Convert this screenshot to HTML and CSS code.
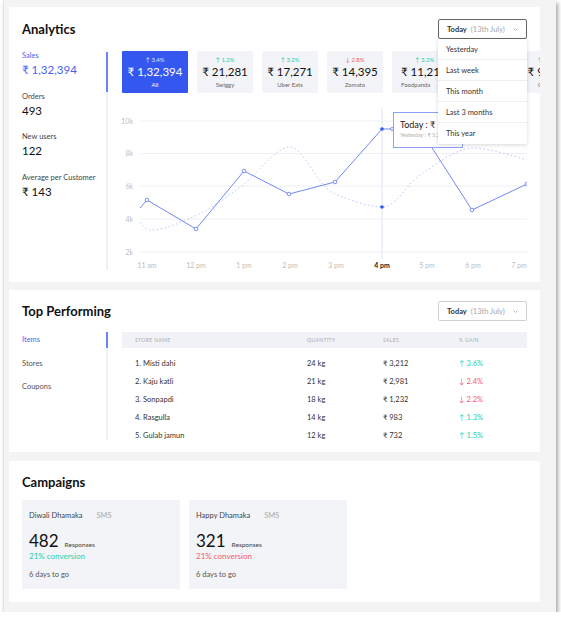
FILE: index.html
```html
<!DOCTYPE html>
<html>
<head>
<meta charset="utf-8">
<title>Dashboard</title>
<link rel="stylesheet" href="styles.css">
</head>
<body>
<div class="frame">
  <section class="card analytics">
    <header class="card-head">
      <h2>Analytics</h2>
      <div class="select open">
        <span class="sel-main">Today</span><span class="sel-sub">(13th July)</span>
        <svg class="caret" width="5" height="3" viewBox="0 0 5 3"><path d="M0.5 0.5 L2.5 2.5 L4.5 0.5" fill="none" stroke="#aaa" stroke-width="0.8"/></svg>
        <ul class="menu">
          <li>Yesterday</li>
          <li>Last week</li>
          <li>This month</li>
          <li>Last 3 months</li>
          <li>This year</li>
        </ul>
      </div>
    </header>
    <div class="an-body">
      <ul class="stats">
        <li class="active"><div class="s-label">Sales</div><div class="s-value">₹ 1,32,394</div></li>
        <li><div class="s-label">Orders</div><div class="s-value">493</div></li>
        <li><div class="s-label">New users</div><div class="s-value">122</div></li>
        <li><div class="s-label">Average per Customer</div><div class="s-value">₹ 143</div></li>
      </ul>
      <div class="an-main">
        <div class="chips">
          <div class="chip active"><div class="pct">↑ 3.4%</div><div class="val">₹ 1,32,394</div><div class="lbl">All</div></div>
          <div class="chip"><div class="pct up">↑ 1.2%</div><div class="val">₹ 21,281</div><div class="lbl">Swiggy</div></div>
          <div class="chip"><div class="pct up">↑ 3.2%</div><div class="val">₹ 17,271</div><div class="lbl">Uber Eats</div></div>
          <div class="chip"><div class="pct down">↓ 2.8%</div><div class="val">₹ 14,395</div><div class="lbl">Zomato</div></div>
          <div class="chip wide"><div class="pct up">↑ 3.2%</div><div class="val">₹ 11,212</div><div class="lbl">Foodpanda</div></div>
          <div class="chip"><div class="pct up">↑ 1.8%</div><div class="val">₹ 9,231</div><div class="lbl">Others</div></div>
        </div>
        <div class="chart">
          <svg width="419" height="177" viewBox="108 93 419 177">
            <g stroke="#eef0f3" stroke-width="1">
              <line x1="140" y1="121" x2="527" y2="121"/>
              <line x1="140" y1="153.5" x2="527" y2="153.5"/>
              <line x1="140" y1="186" x2="527" y2="186"/>
              <line x1="140" y1="219" x2="527" y2="219"/>
              <line x1="140" y1="252" x2="527" y2="252"/>
            </g>
            <line x1="382" y1="108" x2="382" y2="259" stroke="#dfe5fc" stroke-width="1"/>
            <g font-family="Lato, 'Noto Sans', sans-serif" font-size="7" fill="#bdbdbd" text-anchor="end">
              <text x="133" y="123.5">10k</text>
              <text x="133" y="156">8k</text>
              <text x="133" y="188.5">6k</text>
              <text x="133" y="221.5">4k</text>
              <text x="133" y="254.5">2k</text>
            </g>
            <g font-family="Lato, 'Noto Sans', sans-serif" font-size="7" fill="#bdbdbd" text-anchor="middle">
              <text x="147" y="267.5">11 am</text>
              <text x="196" y="267.5">12 pm</text>
              <text x="244" y="267.5">1 pm</text>
              <text x="290" y="267.5">2 pm</text>
              <text x="336" y="267.5">3 pm</text>
              <text x="382" y="267.5" fill="#222" font-weight="700">4 pm</text>
              <text x="427" y="267.5">5 pm</text>
              <text x="473" y="267.5">6 pm</text>
              <text x="519" y="267.5">7 pm</text>
            </g>
            <path d="M140 222 C143 226 146 230 151 230 C165 230 182 222 197 215 C214 207 228 196 243 185 C259 172 276 147 290 147 C303 147 318 186 333 193 C348 200 370 207 382 207 C396 207 407 184 420 175 C437 163 458 148 472 148 C490 148 512 156 527 160" fill="none" stroke="#b9c5fa" stroke-width="1" stroke-dasharray="1.5 2.5"/>
            <polyline points="140,208 147,200 196,229 244,171 289,194 335,182 382,129 392,129 427,140 472,210 527,184" fill="none" stroke="#7189f3" stroke-width="1"/>
            <g fill="#fff" stroke="#6d86f3" stroke-width="0.9">
              <circle cx="147" cy="200" r="1.8"/>
              <circle cx="196" cy="229" r="1.8"/>
              <circle cx="244" cy="171" r="1.8"/>
              <circle cx="289" cy="194" r="1.8"/>
              <circle cx="335" cy="182" r="1.8"/>
              <circle cx="392" cy="129" r="1.5"/>
              <circle cx="472" cy="210" r="1.8"/>
              <circle cx="527" cy="184" r="1.8"/>
            </g>
            <circle cx="382" cy="129" r="1.8" fill="#3457f0"/>
            <circle cx="382" cy="207" r="1.8" fill="#3457f0"/>
          </svg>
          <div class="tooltip">
            <div class="tt-main">Today : ₹ 1,32,394</div>
            <div class="tt-sub">Yesterday : ₹ 5,212</div>
          </div>
        </div>
      </div>
    </div>
  </section>

  <section class="card top">
    <header class="card-head">
      <h2>Top Performing</h2>
      <div class="select">
        <span class="sel-main">Today</span><span class="sel-sub">(13th July)</span>
        <svg class="caret" width="5" height="3" viewBox="0 0 5 3"><path d="M0.5 0.5 L2.5 2.5 L4.5 0.5" fill="none" stroke="#aaa" stroke-width="0.8"/></svg>
      </div>
    </header>
    <div class="tp-body">
      <ul class="nav">
        <li class="active">Items</li>
        <li>Stores</li>
        <li>Coupons</li>
      </ul>
      <div class="table">
        <div class="t-head"><span>Store name</span><span>Quantity</span><span>Sales</span><span>% Gain</span></div>
        <div class="t-row"><span>1. Misti dahi</span><span>24 kg</span><span>₹ 3,212</span><span class="up">↑ 3.6%</span></div>
        <div class="t-row"><span>2. Kaju katli</span><span>21 kg</span><span>₹ 2,981</span><span class="down">↓ 2.4%</span></div>
        <div class="t-row"><span>3. Sonpapdi</span><span>18 kg</span><span>₹ 1,232</span><span class="down">↓ 2.2%</span></div>
        <div class="t-row"><span>4. Rasgulla</span><span>14 kg</span><span>₹ 983</span><span class="up">↑ 1.3%</span></div>
        <div class="t-row"><span>5. Gulab jamun</span><span>12 kg</span><span>₹ 732</span><span class="up">↑ 1.5%</span></div>
      </div>
    </div>
  </section>

  <section class="card campaigns">
    <h2>Campaigns</h2>
    <div class="camps">
      <div class="camp">
        <div class="camp-head"><span>Diwali Dhamaka</span><span class="tag">SMS</span></div>
        <div class="camp-num"><span class="big">482</span><span class="resp">Responses</span></div>
        <div class="conv up">21% conversion</div>
        <div class="days">6 days to go</div>
      </div>
      <div class="camp">
        <div class="camp-head"><span>Happy Dhamaka</span><span class="tag">SMS</span></div>
        <div class="camp-num"><span class="big">321</span><span class="resp">Responses</span></div>
        <div class="conv down">21% conversion</div>
        <div class="days">6 days to go</div>
      </div>
    </div>
  </section>
</div>
</body>
</html>
```

FILE: styles.css
```css
* { box-sizing: border-box; margin: 0; padding: 0; }
body { background: #fff; font-family: Lato, "Noto Sans", sans-serif; color: #222; }

.frame {
  margin-left: 3px;
  width: 553px;
  height: 612px;
  background: #f4f4f4;
  border-left: 1px solid #e4e4e4;
  box-shadow: 2px 3px 4px rgba(0,0,0,0.35);
  padding: 7px 16px 0 5px;
  display: flex;
  flex-direction: column;
  gap: 8px;
}

.card { background: #fff; padding: 12px 13px; position: relative; overflow: hidden; }
.analytics { height: 275px; }
.top { height: 162px; padding-top: 11px; }
.campaigns { height: 141px; margin-top: 1px; }

.card-head { display: flex; justify-content: space-between; align-items: center; height: 20px; }
h2 { font-size: 13px; font-weight: 700; color: #111; line-height: 18px; }

.select {
  width: 89px; height: 20px;
  border: 1px solid #cfcfcf; border-radius: 2px;
  display: flex; align-items: center;
  padding: 0 8px;
  font-size: 7.5px;
  position: relative;
  background: #fff;
  white-space: nowrap;
}
.select.open { border-color: #666; }
.sel-main { font-weight: 700; color: #333; }
.sel-sub { color: #a6a6a6; margin-left: 4px; }
.caret { margin-left: auto; }

.menu {
  position: absolute; top: 100%; left: -1px; width: 89px;
  margin-top: 1px;
  background: #fff; list-style: none;
  box-shadow: 0 1px 4px rgba(0,0,0,0.16);
  z-index: 10;
}
.menu li { height: 21px; line-height: 21px; padding-left: 8px; font-size: 7.5px; color: #333; border-bottom: 1px solid #eee; }
.menu li:last-child { border-bottom: none; }

.an-body { display: flex; margin-top: 12px; height: 219px; }
.stats { width: 86px; flex: none; border-right: 2px solid #eef0f3; list-style: none; }
.stats li { position: relative; height: 40.5px; }
.stats li.active::after { content: ""; position: absolute; right: -2px; top: 1px; height: 40px; width: 2px; background: #6b84f3; }
.s-label { font-size: 7.5px; line-height: 10px; color: #444; }
.s-value { font-size: 11.5px; line-height: 17px; color: #111; white-space: nowrap; }
.stats li.active .s-label, .stats li.active .s-value { color: #4864f0; }

.an-main { flex: 1; min-width: 0; padding-left: 14px; }
.chips { display: flex; gap: 9px; height: 42px; }
.chip {
  flex: none; width: 56px; background: #f3f4f8; border-radius: 1px;
  display: flex; flex-direction: column; align-items: center; justify-content: center;
  white-space: nowrap;
}
.chip.wide { width: 118px; align-items: flex-start; padding-left: 9px; }
.chip.wide .pct { padding-left: 14px; }
.chip .pct { font-size: 6px; line-height: 9px; }
.chip .val { font-size: 11.5px; line-height: 16px; color: #111; }
.chip .lbl { font-size: 6px; line-height: 9px; color: #666; }
.chip.active { background: #3457f0; width: 66px; }
.chip.active .val, .chip.active .lbl { color: #fff; }
.chip.active .pct { color: #dfe5ff; }

.up { color: #22d1ad; }
.down { color: #f45a6d; }

.chart { position: relative; margin-left: -14px; height: 177px; }
.chart svg { display: block; }
.tooltip {
  position: absolute; left: 285px; top: 19px; width: 70px; height: 36px;
  background: #fff; border: 1px solid #8ca0f6;
  padding: 5px 6px; overflow: hidden; white-space: nowrap;
}
.tt-main { font-size: 9px; line-height: 13px; color: #222; }
.tt-sub { font-size: 5.5px; line-height: 9px; color: #b0b0b0; }

.tp-body { display: flex; margin-top: 11px; }
.nav { width: 86px; flex: none; height: 108px; border-right: 2px solid #eef0f3; list-style: none; }
.nav li { position: relative; height: 16px; line-height: 16px; font-size: 7.5px; color: #555; margin-bottom: 7.5px; }
.nav li.active { color: #4864f0; }
.nav li.active::after { content: ""; position: absolute; right: -2px; top: 0; height: 16px; width: 2px; background: #6b84f3; }

.table { margin-left: 14px; flex: 1; }
.t-head, .t-row { display: grid; grid-template-columns: 172px 76px 76px 1fr; padding-left: 13px; }
.t-head { background: #f1f2f6; height: 16px; line-height: 16px; font-size: 5px; color: #aaa; letter-spacing: 0.4px; text-transform: uppercase; margin-bottom: 7px; }
.t-row { height: 18px; line-height: 18px; font-size: 7.5px; color: #333; }

.camps { display: flex; gap: 9px; margin-top: 9px; }
.camp { width: 158px; height: 89px; background: #f3f4f8; padding: 11px 7px 0; }
.camp-head { font-size: 7.5px; line-height: 10px; color: #444; }
.camp-head .tag { color: #aaa; margin-left: 14px; }
.camp-num { display: flex; align-items: baseline; margin-top: 10px; height: 20px; }
.camp-num .big { font-size: 17px; line-height: 20px; color: #111; }
.camp-num .resp { font-size: 6.5px; color: #444; margin-left: 6px; }
.conv { font-size: 8px; line-height: 10px; }
.days { font-size: 7.5px; line-height: 10px; color: #555; margin-top: 9px; }
```
